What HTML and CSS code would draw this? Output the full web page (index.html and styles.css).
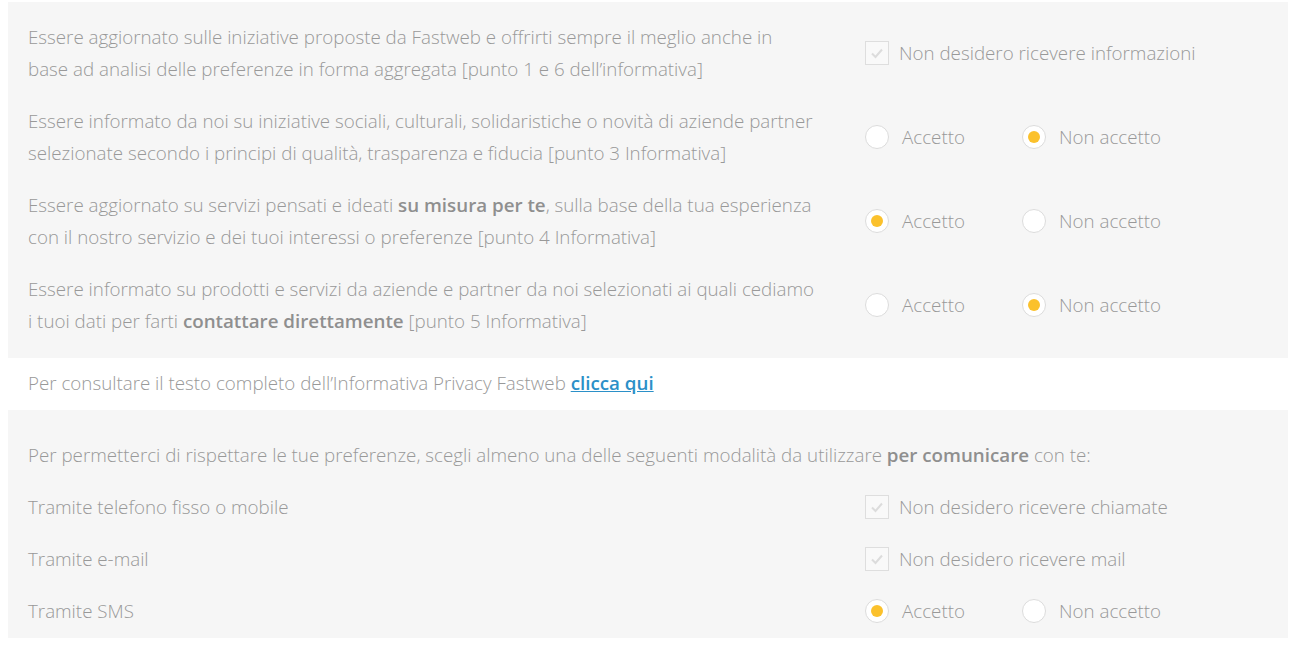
FILE: index.html
```html
<!DOCTYPE html>
<html lang="it">
<head>
<meta charset="utf-8">
<link rel="stylesheet" href="styles.css">
</head>
<body>
<div class="page">
  <section class="panel panel-consents">
    <div class="row">
      <p class="desc">Essere aggiornato sulle iniziative proposte da Fastweb e offrirti sempre il meglio anche in base ad analisi delle preferenze in forma aggregata [punto 1 e 6 dell’informativa]</p>
      <div class="opts">
        <label class="check"><span class="box"><svg viewBox="0 0 24 24" width="24" height="24"><path d="M7 12.5 L10.5 16 L17 8.5" fill="none" stroke="#dcdcdc" stroke-width="2"/></svg></span>Non desidero ricevere informazioni</label>
      </div>
    </div>
    <div class="row">
      <p class="desc">Essere informato da noi su iniziative sociali, culturali, solidaristiche o novità di aziende partner selezionate secondo i principi di qualità, trasparenza e fiducia [punto 3 Informativa]</p>
      <div class="opts">
        <label class="radio"><span class="dot"></span>Accetto</label>
        <label class="radio"><span class="dot on"></span>Non accetto</label>
      </div>
    </div>
    <div class="row">
      <p class="desc">Essere aggiornato su servizi pensati e ideati <b>su misura per te</b>, sulla base della tua esperienza con il nostro servizio e dei tuoi interessi o preferenze [punto 4 Informativa]</p>
      <div class="opts">
        <label class="radio"><span class="dot on"></span>Accetto</label>
        <label class="radio"><span class="dot"></span>Non accetto</label>
      </div>
    </div>
    <div class="row">
      <p class="desc">Essere informato su prodotti e servizi da aziende e partner da noi selezionati ai quali cediamo i tuoi dati per farti <b>contattare direttamente</b> [punto 5 Informativa]</p>
      <div class="opts">
        <label class="radio"><span class="dot"></span>Accetto</label>
        <label class="radio"><span class="dot on"></span>Non accetto</label>
      </div>
    </div>
  </section>
  <p class="note">Per consultare il testo completo dell’Informativa Privacy Fastweb <a href="#">clicca qui</a></p>
  <section class="panel panel-channels">
    <p class="intro">Per permetterci di rispettare le tue preferenze, scegli almeno una delle seguenti modalità da utilizzare <b>per comunicare</b> con te:</p>
    <div class="crow">
      <p class="desc">Tramite telefono fisso o mobile</p>
      <div class="opts">
        <label class="check"><span class="box"><svg viewBox="0 0 24 24" width="24" height="24"><path d="M7 12.5 L10.5 16 L17 8.5" fill="none" stroke="#dcdcdc" stroke-width="2"/></svg></span>Non desidero ricevere chiamate</label>
      </div>
    </div>
    <div class="crow">
      <p class="desc">Tramite e-mail</p>
      <div class="opts">
        <label class="check"><span class="box"><svg viewBox="0 0 24 24" width="24" height="24"><path d="M7 12.5 L10.5 16 L17 8.5" fill="none" stroke="#dcdcdc" stroke-width="2"/></svg></span>Non desidero ricevere mail</label>
      </div>
    </div>
    <div class="crow">
      <p class="desc">Tramite SMS</p>
      <div class="opts">
        <label class="radio"><span class="dot on"></span>Accetto</label>
        <label class="radio"><span class="dot"></span>Non accetto</label>
      </div>
    </div>
  </section>
</div>
</body>
</html>
```

FILE: styles.css
```css
* { box-sizing: border-box; }
html, body { margin: 0; padding: 0; background: #fff; }
body {
  font-family: "Open Sans", "Noto Sans", sans-serif;
  font-weight: 300;
  font-size: 18.75px;
  color: #999;
}
.page { padding: 2px 10px 0 8px; }
p { margin: 0; }
b { font-weight: 600; color: #8f8f8f; }
.panel { background: #f6f6f6; padding: 0 20px; }
.panel-consents { padding-top: 19px; padding-bottom: 21px; display: flex; flex-direction: column; gap: 20px; }
.row { display: flex; align-items: center; }
.desc { width: 837px; line-height: 32px; padding-right: 51px; flex: none; }
.opts { display: flex; align-items: center; }
.check { display: flex; align-items: center; gap: 10px; line-height: 32px; }
.box { width: 24px; height: 24px; border: 1px solid #dedede; background: #f9f9f9; display: flex; align-items: center; justify-content: center; }
.box svg { display: block; margin: -1px; }
.radio { display: flex; align-items: center; gap: 13px; width: 157px; line-height: 32px; }
.dot { width: 24px; height: 24px; border-radius: 50%; border: 1px solid #dcdcdc; background: #fff; display: flex; align-items: center; justify-content: center; }
.dot.on::after { content: ""; width: 12px; height: 12px; border-radius: 50%; background: #fbc12c; }
.note { line-height: 32px; padding: 9px 20px 11px; }
.note a { color: #2b90c8; font-weight: 600; text-decoration: underline; }
.panel-channels { padding-top: 29px; padding-bottom: 11px; display: flex; flex-direction: column; gap: 20px; }
.intro { line-height: 32px; }
.crow { display: flex; align-items: center; height: 32px; }
```
